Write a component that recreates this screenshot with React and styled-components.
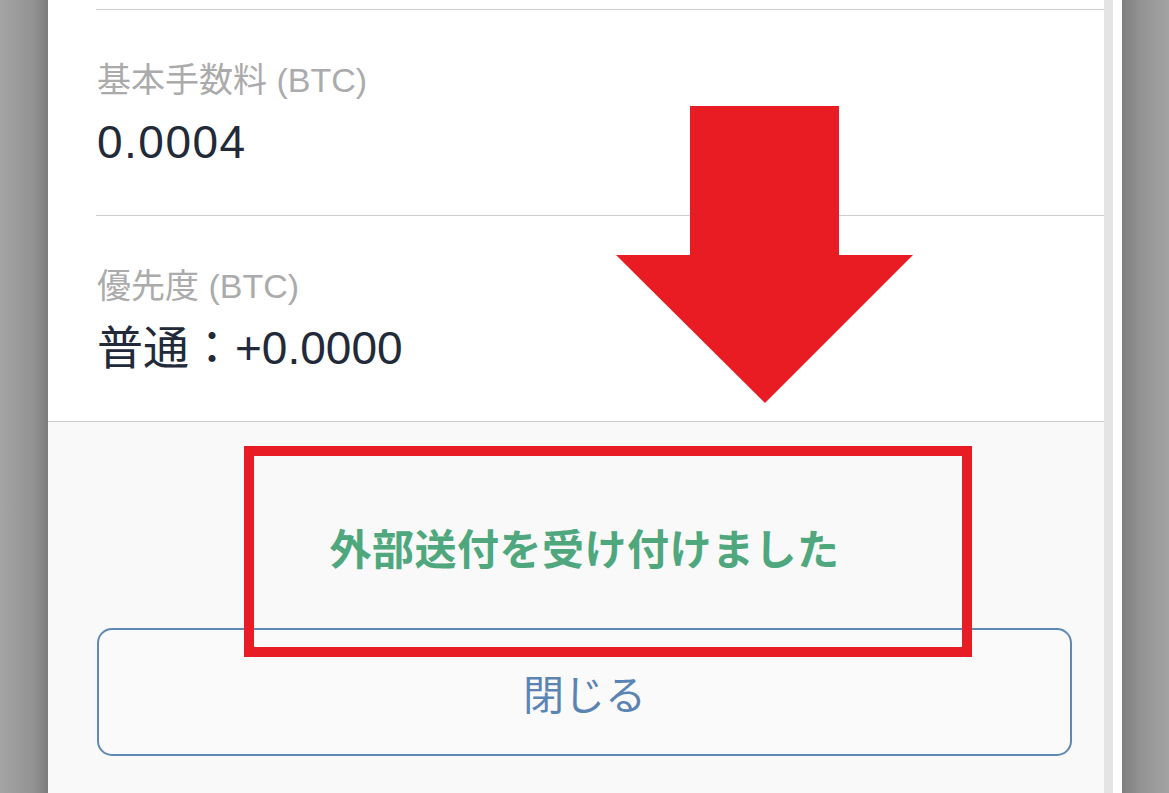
import React from "react";
import styled, { createGlobalStyle } from "styled-components";

const GlobalStyle = createGlobalStyle`
  html, body {
    margin: 0;
    padding: 0;
    background: #8f8f8f;
  }
  body {
    font-family: "Liberation Sans", "Noto Sans CJK JP", sans-serif;
  }
`;

const Page = styled.div`
  display: flex;
  width: 1169px;
  height: 793px;
  overflow: hidden;
`;

const Shade = styled.div`
  flex: 0 0 ${(p) => p.$width}px;
  background: ${(p) =>
    p.$side === "left"
      ? "linear-gradient(to right, #a5a5a5 0%, #929292 70%, #7c7c7c 100%)"
      : "linear-gradient(to right, #7e7e7e 0%, #939393 40%, #a3a3a3 100%)"};
`;

const Panel = styled.div`
  position: relative;
  flex: 1;
  display: flex;
  background: #fff;
`;

const Content = styled.div`
  flex: 1;
  display: flex;
  flex-direction: column;
`;

const ScrollTrack = styled.div`
  flex: 0 0 9px;
  background: #e4e4e4;
`;

const Gutter = styled.div`
  flex: 0 0 9px;
  background: #fff;
`;

const PrevRow = styled.div`
  height: 9px;
  margin-left: 48px;
  border-bottom: 1px solid #cdcdcd;
`;

const Row = styled.div`
  margin-left: ${(p) => (p.$full ? 0 : 48)}px;
  padding: 50px 0 47px ${(p) => (p.$full ? 49 : 1)}px;
  display: flex;
  flex-direction: column;
  gap: 16px;
  border-bottom: 1px solid #cdcdcd;
`;

const Label = styled.div`
  font-size: 34px;
  line-height: 40px;
  color: #ababab;
`;

const Value = styled.div`
  font-size: 46px;
  line-height: 52px;
  color: #222a3a;
  letter-spacing: ${(p) => (p.$cjk ? 0 : 1.5)}px;
`;

const Footer = styled.div`
  position: relative;
  flex: 1;
  background: #f9f9f9;
  padding: 104px 32px 0 49px;
  display: flex;
  flex-direction: column;
  align-items: center;
`;

const Message = styled.div`
  font-size: 42px;
  line-height: 50px;
  font-weight: 700;
  color: #4fa77d;
  letter-spacing: 0.5px;
`;

const CloseButton = styled.button`
  margin-top: 52px;
  width: 100%;
  height: 128px;
  border: 2px solid #5f88b7;
  border-radius: 15px;
  background: #fafafa;
  color: #5a84b4;
  font-family: "Noto Sans CJK JP", sans-serif;
  font-size: 41px;
  cursor: pointer;
`;

const Highlight = styled.div`
  position: absolute;
  left: 196px;
  top: 24px;
  width: 708px;
  height: 191px;
  border: 10px solid #e81c25;
  z-index: 2;
`;

const Arrow = styled.svg`
  position: absolute;
  left: 568px;
  top: 106px;
  z-index: 3;
`;

const rows = [
  { label: "基本手数料 (BTC)", value: "0.0004" },
  { label: "優先度 (BTC)", value: "普通：+0.0000", cjk: true, full: true },
];

export default function App() {
  return (
    <>
      <GlobalStyle />
      <Page>
        <Shade $side="left" $width={48} />
        <Panel>
          <Content>
            <PrevRow />
            {rows.map((r) => (
              <Row key={r.label} $full={r.full}>
                <Label>{r.label}</Label>
                <Value $cjk={r.cjk}>{r.value}</Value>
              </Row>
            ))}
            <Footer>
              <Message>外部送付を受け付けました</Message>
              <CloseButton>閉じる</CloseButton>
              <Highlight />
            </Footer>
          </Content>
          <ScrollTrack />
          <Gutter />
          <Arrow width="297" height="297" viewBox="0 0 297 297">
            <polygon
              points="74,0 223,0 223,149 297,149 149,297 0,149 74,149"
              fill="#e91c24"
            />
          </Arrow>
        </Panel>
        <Shade $side="right" $width={47} />
      </Page>
    </>
  );
}
